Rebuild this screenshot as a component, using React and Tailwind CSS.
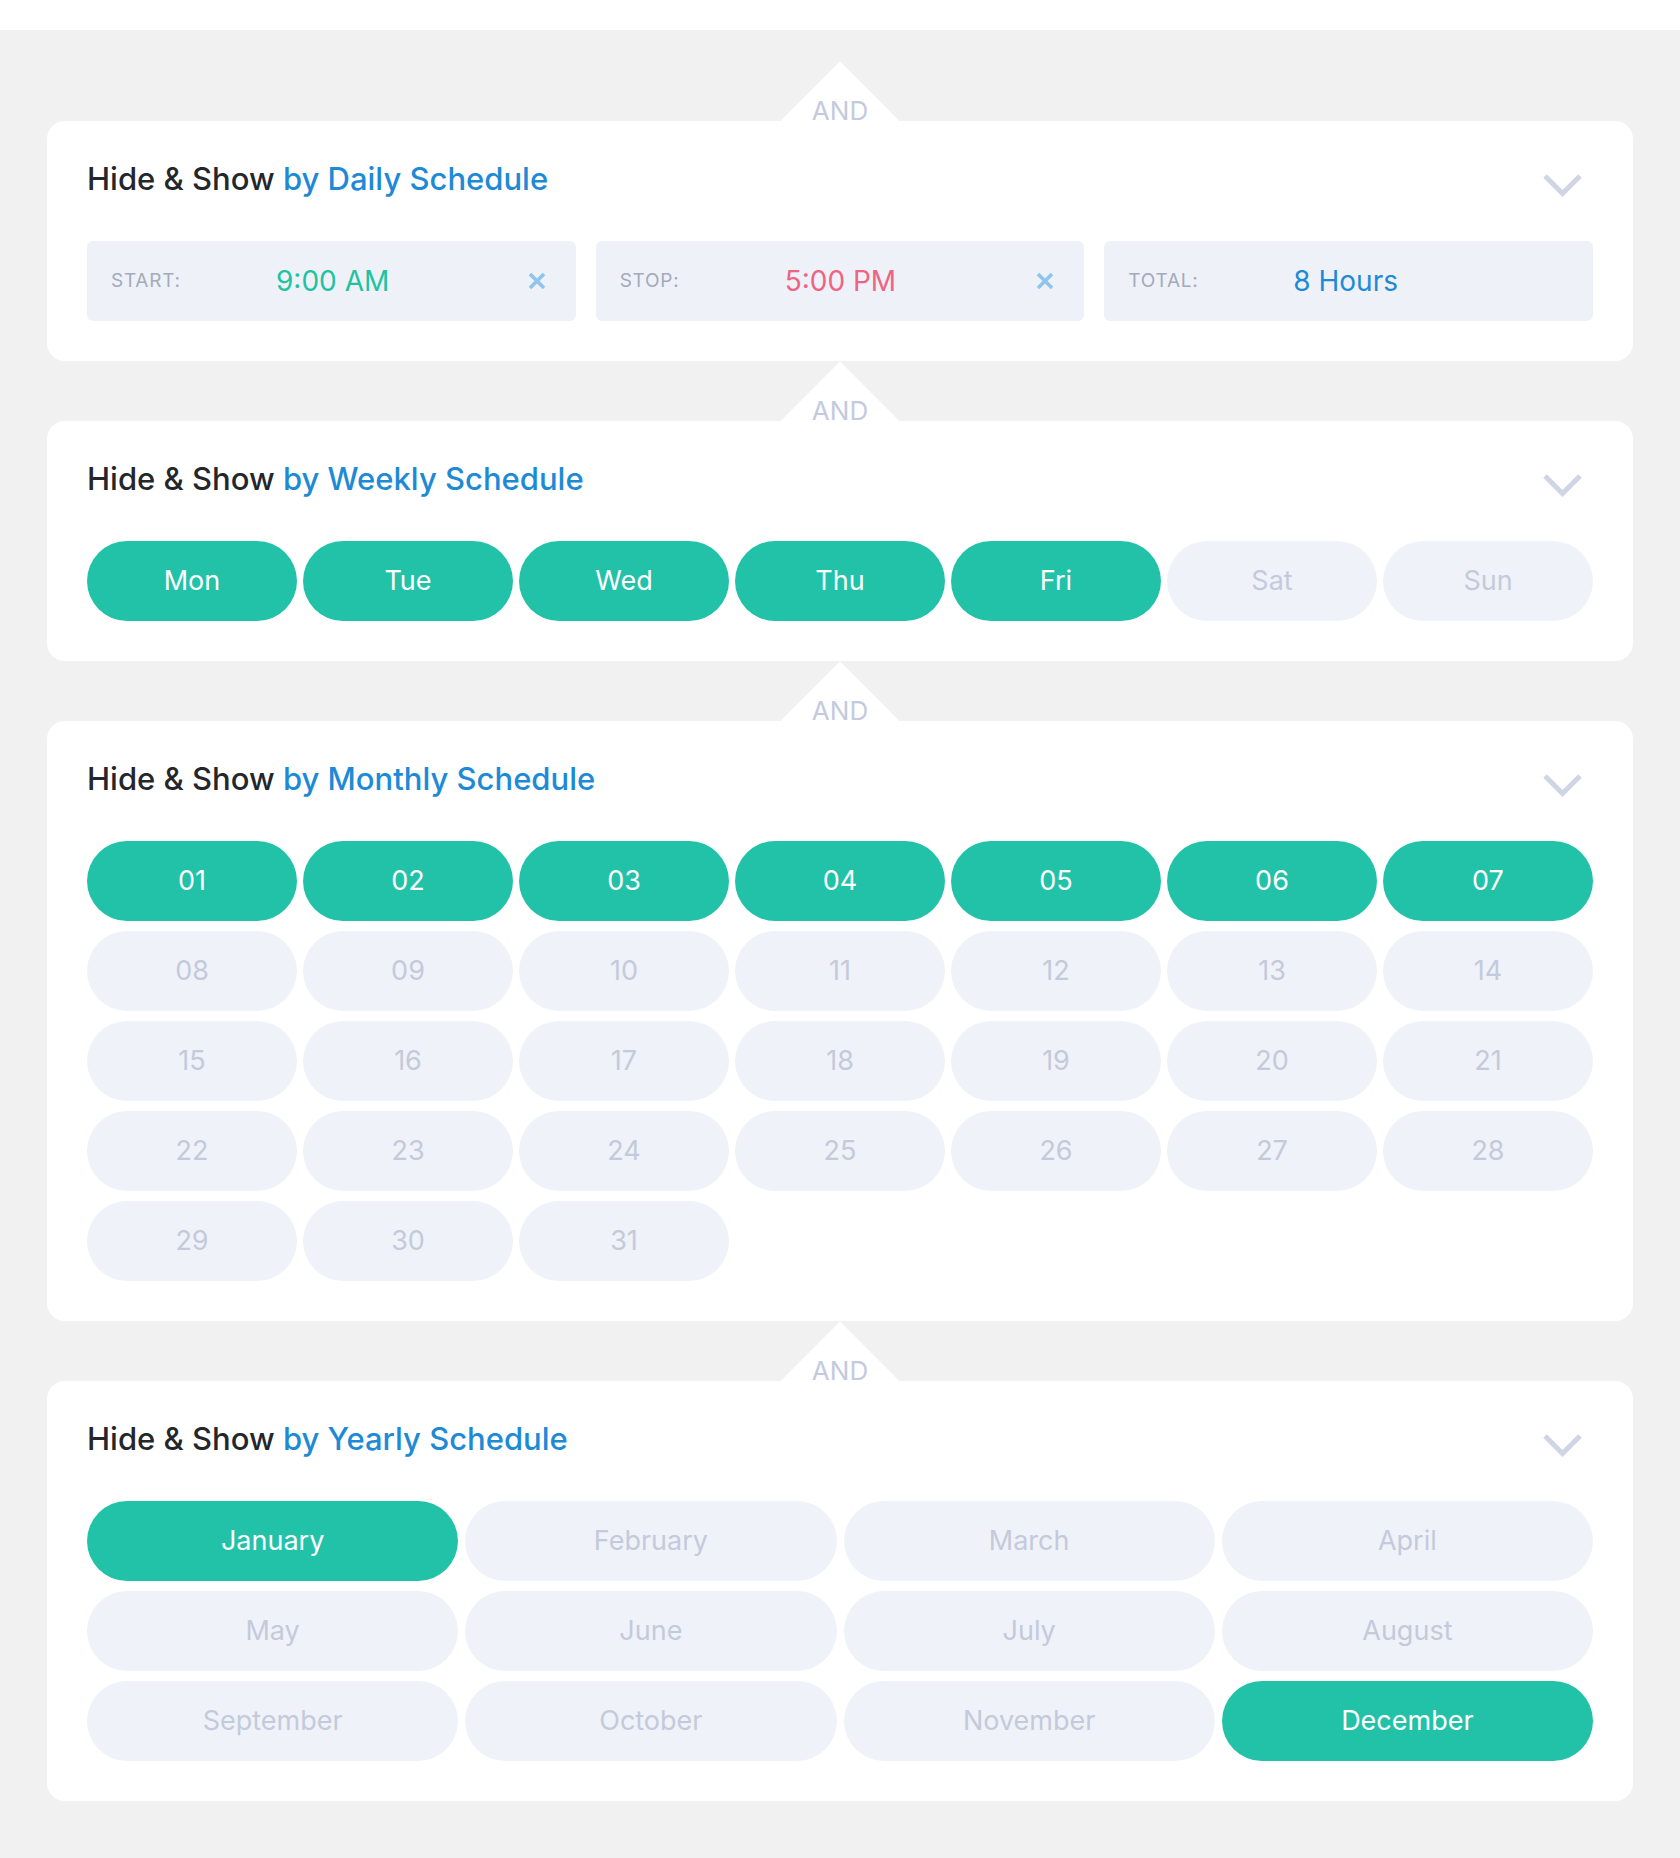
import React from 'react';

const days = ['Mon', 'Tue', 'Wed', 'Thu', 'Fri', 'Sat', 'Sun'];
const activeDays = ['Mon', 'Tue', 'Wed', 'Thu', 'Fri'];
const months = [
  'January', 'February', 'March', 'April',
  'May', 'June', 'July', 'August',
  'September', 'October', 'November', 'December',
];
const activeMonths = ['January', 'December'];
const dates = Array.from({ length: 31 }, (_, i) => String(i + 1).padStart(2, '0'));

const Chevron = () => (
  <svg width="41" height="24" viewBox="0 0 41 24" fill="none" className="mr-[10px] mt-[12px] shrink-0">
    <path d="M3 3 L20.5 20.5 L38 3" stroke="#d0d5e5" strokeWidth="5" strokeLinejoin="miter" />
  </svg>
);

const Cross = () => (
  <svg width="18" height="18" viewBox="0 0 18 18" fill="none" className="ml-auto mr-[-1px] shrink-0">
    <path d="M2 2 L16 16 M16 2 L2 16" stroke="#8ec4ee" strokeWidth="3.6" />
  </svg>
);

const Pill = ({ label, active }) => (
  <div
    className={
      active
        ? 'flex h-[80px] items-center justify-center rounded-full bg-[#21c2a8] text-[27px] text-white'
        : 'flex h-[80px] items-center justify-center rounded-full bg-[#eff2f8] text-[27px] text-[#c4cadb]'
    }
  >
    {label}
  </div>
);

const Section = ({ title, children }) => (
  <section className="relative mt-[60px]">
    {/* AND connector */}
    <div className="absolute left-1/2 top-0 h-[84px] w-[84px] -translate-x-1/2 -translate-y-1/2 rotate-45 bg-white" />
    <div className="relative rounded-[18px] bg-white p-[40px]">
      <div className="flex items-start justify-between">
        <h2 className="text-[31px] font-medium leading-[36px] text-[#23272c]">
          Hide &amp; Show <span className="text-[#1e8ad6]">by {title} Schedule</span>
        </h2>
        <Chevron />
      </div>
      <div className="mt-[44px]">{children}</div>
    </div>
    <span className="absolute left-1/2 top-[-23px] -translate-x-1/2 text-[26px] leading-none text-[#c3cadd]">
      AND
    </span>
  </section>
);

const TimeBox = ({ label, value, color, clear }) => (
  <div className="flex h-[80px] items-center rounded-[6px] bg-[#eef2f8] pl-6 pr-[31px]">
    <span className="w-[165px] shrink-0 text-[19px] uppercase tracking-[0.04em] text-[#a3aabb]">{label}</span>
    <span className={`text-[28px] ${color}`}>{value}</span>
    {clear && <Cross />}
  </div>
);

export default function App() {
  return (
    <div className="min-h-screen bg-[#f1f1f1] font-['Inter',sans-serif]">
      <div className="h-[30px] bg-white" />
      <div className="px-[47px] pb-[57px] pt-[31px]">
        <Section title="Daily">
          <div className="grid grid-cols-3 gap-5">
            <TimeBox label="Start:" value="9:00 AM" color="text-[#21c2a0]" clear />
            <TimeBox label="Stop:" value="5:00 PM" color="text-[#ef6383]" clear />
            <TimeBox label="Total:" value="8 Hours" color="text-[#1e8ad6]" />
          </div>
        </Section>

        <Section title="Weekly">
          <div className="grid grid-cols-7 gap-x-[6px]">
            {days.map((d) => (
              <Pill key={d} label={d} active={activeDays.includes(d)} />
            ))}
          </div>
        </Section>

        <Section title="Monthly">
          <div className="grid grid-cols-7 gap-x-[6px] gap-y-[10px]">
            {dates.map((d, i) => (
              <Pill key={d} label={d} active={i < 7} />
            ))}
          </div>
        </Section>

        <Section title="Yearly">
          <div className="grid grid-cols-4 gap-x-[7px] gap-y-[10px]">
            {months.map((m) => (
              <Pill key={m} label={m} active={activeMonths.includes(m)} />
            ))}
          </div>
        </Section>
      </div>
    </div>
  );
}
